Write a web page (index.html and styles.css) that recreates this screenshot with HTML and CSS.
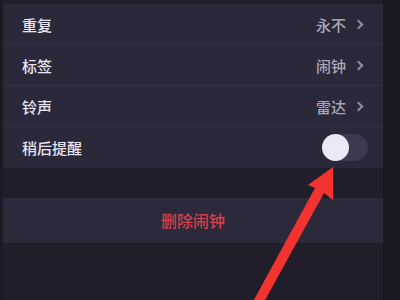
FILE: index.html
```html
<!DOCTYPE html>
<html lang="zh">

<head>
    <meta charset="UTF-8">
    <title>编辑闹钟</title>
    <link rel="stylesheet" href="styles.css">
</head>

<body>
    <div class="phone">
        <div class="screen">
            <ul class="group">
                <li class="row"><span class="label">重复</span><span class="value">永不</span><span class="chev"></span></li>
                <li class="row"><span class="label">标签</span><span class="value">闹钟</span><span class="chev"></span></li>
                <li class="row"><span class="label">铃声</span><span class="value">雷达</span><span class="chev"></span></li>
                <li class="row"><span class="label">稍后提醒</span><span class="switch"><span class="knob"></span></span></li>
            </ul>
            <div class="gap"></div>
            <div class="delete">删除闹钟</div>
        </div>
        <div class="edge"></div>
    </div>

    <!-- 标注箭头 -->
    <svg class="arrow" width="400" height="300" viewBox="0 0 400 300">
        <polygon points="244,318 315,188 308,185 333,167 333,200 324,193 253,322" fill="#f2332f" />
    </svg>
</body>

</html>
```

FILE: styles.css
```css
* {
    margin: 0;
    padding: 0;
    box-sizing: border-box;
}

body {
    width: 400px;
    height: 300px;
    overflow: hidden;
    background: #201e2a;
    font-family: "Noto Sans CJK SC", "Noto Sans", sans-serif;
}

.phone {
    display: flex;
    height: 300px;
}

.screen {
    flex: 1;
    padding-top: 4px;
    border-left: 3px solid #1c1a25;
}

.edge {
    width: 17px;
    background: #1a1822;
}

.group {
    list-style: none;
    background: #2b2839;
}

.row {
    display: flex;
    align-items: center;
    height: 41px;
    padding: 0 15px 0 19px;
    border-bottom: 1px solid #343142;
    font-size: 15px;
    font-weight: 500;
}

.row:last-child {
    border-bottom: none;
}

.label {
    flex: 1;
    color: #e6e4f0;
}

.value {
    color: #aaa7b8;
}

.chev {
    width: 7px;
    height: 7px;
    margin-left: 9px;
    margin-right: 6px;
    border-top: 2px solid #8f8c9e;
    border-right: 2px solid #8f8c9e;
    transform: rotate(45deg);
}

.switch {
    display: flex;
    align-items: center;
    width: 46px;
    height: 27px;
    border-radius: 14px;
    background: #3c3951;
}

.knob {
    width: 27px;
    height: 27px;
    border-radius: 50%;
    background: #ebe9f5;
}

.gap {
    height: 30px;
}

.delete {
    height: 45px;
    line-height: 45px;
    text-align: center;
    padding-right: 0;
    background: #2c293a;
    color: #d5404d;
    font-size: 16px;
    font-weight: 500;
}

.arrow {
    position: absolute;
    left: 0;
    top: 0;
}
```
